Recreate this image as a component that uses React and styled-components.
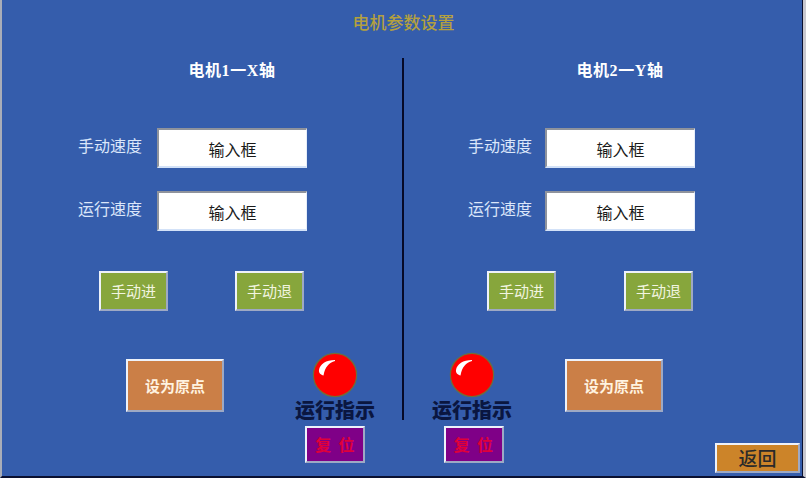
import React from 'react';
import styled, {createGlobalStyle} from 'styled-components';

const GlobalStyle = createGlobalStyle`
  html, body {
    margin: 0;
    padding: 0;
    background: #355dac;
  }
  * {
    box-sizing: border-box;
  }
`;

const CJK = `"Liberation Serif", "Noto Sans CJK SC", serif`;

const Screen = styled.div`
  width: 806px;
  height: 478px;
  overflow: hidden;
  background: #355dac;
  border-left: 2px solid #a9adb8;
  border-right: 3px solid #c8c8d0;
  border-bottom: 2px solid #0a1030;
  box-shadow: inset -1px 0 0 #0a1030;
  font-family: "Noto Sans CJK SC", sans-serif;
`;

const Title = styled.div`
  height: 58px;
  padding-top: 10px;
  padding-left: 2px;
  text-align: center;
  font-size: 17px;
  line-height: 24px;
  font-weight: 500;
  color: #b3a03f;
`;

const Body = styled.div`
  display: grid;
  grid-template-columns: 400px 2px 1fr;
`;

const Divider = styled.div`
  height: 362px;
  background: #060a28;
`;

const Panel = styled.div`
  display: flex;
  flex-direction: column;
`;

const Heading = styled.div`
  width: ${p => p.$width}px;
  height: 24px;
  margin-left: ${p => p.$left}px;
  margin-bottom: 46px;
  text-align: center;
  font-family: ${CJK};
  font-size: 16px;
  line-height: 26px;
  font-weight: 700;
  letter-spacing: 0.6px;
  color: #fff;
`;

const Fields = styled.div`
  display: flex;
  flex-direction: column;
  gap: 23px;
  margin-left: ${p => p.$left}px;
  margin-bottom: 40px;
`;

const FieldRow = styled.div`
  display: flex;
  align-items: center;
  gap: ${p => p.$gap}px;
`;

const FieldLabel = styled.span`
  width: 64px;
  margin-top: -6px;
  font-size: 16px;
  line-height: 24px;
  color: #dbe6fa;
  white-space: nowrap;
`;

const InputBox = styled.div`
  width: 150px;
  height: 40px;
  padding-top: 2px;
  display: flex;
  align-items: center;
  justify-content: center;
  background: #fff;
  border-style: solid;
  border-width: 2px 1px 2px 2px;
  border-color: #8f939c #e6eefa #d3e2f8 #8f939c;
  font-size: 16px;
  color: #1a1a1a;
`;

const JogRow = styled.div`
  display: flex;
  gap: ${p => p.$gap}px;
  margin-left: ${p => p.$left}px;
  margin-bottom: 41px;
`;

const Bevel = styled.div`
  display: flex;
  align-items: center;
  justify-content: center;
  flex-shrink: 0;
  border: 2px solid;
  border-color: #eef2fa #9ea9c4 #9ea9c4 #eef2fa;
  white-space: pre;
`;

const JogButton = styled(Bevel)`
  width: 69px;
  height: 40px;
  padding-bottom: 2px;
  background: #87a63c;
  font-size: 15px;
  color: #f2f5e0;
`;

const BottomRow = styled.div`
  display: flex;
  align-items: flex-start;
  gap: ${p => p.$gap}px;
  margin-left: ${p => p.$left}px;
`;

const OriginButton = styled(Bevel)`
  width: 98px;
  height: 53px;
  margin-top: 7px;
  background: #cb7f47;
  font-size: 15px;
  font-weight: 700;
  color: #fff3e0;
`;

const Indicator = styled.div`
  width: 80px;
  display: flex;
  flex-direction: column;
  align-items: center;
`;

const Lamp = styled.svg`
  display: block;
  width: 46px;
  height: 46px;
`;

const IndicatorLabel = styled.div`
  height: 28px;
  font-family: ${CJK};
  font-size: 20px;
  line-height: 26px;
  font-weight: 900;
  color: #0a1640;
  white-space: nowrap;
`;

const ResetButton = styled(Bevel)`
  width: 60px;
  height: 37px;
  margin-left: ${p => p.$shift}px;
  padding-bottom: 2px;
  background: #7f0087;
  font-size: 16px;
  font-weight: 700;
  color: #e0003a;
`;

const BackButton = styled(Bevel)`
  width: 85px;
  height: 30px;
  margin-top: 91px;
  margin-left: -1px;
  padding-bottom: 2px;
  background: #cc8429;
  font-family: ${CJK};
  font-size: 19px;
  font-weight: 500;
  color: #2a2a2a;
`;

function RunLamp() {
  return (
    <Lamp viewBox="0 0 46 46">
      <circle cx="23" cy="23" r="21.6" fill="#f00" stroke="#6f6f3a" strokeWidth="1.2" />
      <path d="M7 18 C8 12 14 8 23 8 L23 9 C17 10.5 13 15 11.5 23.5 C9 23 6.5 21 7 18 Z" fill="#fff" />
    </Lamp>
  );
}

function Field({label, gap}) {
  return (
    <FieldRow $gap={gap}>
      <FieldLabel>{label}</FieldLabel>
      <InputBox>输入框</InputBox>
    </FieldRow>
  );
}

function RunIndicator({resetShift = 0}) {
  return (
    <Indicator>
      <RunLamp />
      <IndicatorLabel>运行指示</IndicatorLabel>
      <ResetButton $shift={resetShift}>{'复  位'}</ResetButton>
    </Indicator>
  );
}

export default function App() {
  return (
    <>
      <GlobalStyle />
      <Screen>
        <Title>电机参数设置</Title>
        <Body>
          <Panel>
            <Heading $left={76} $width={308}>电机1一X轴</Heading>
            <Fields $left={76}>
              <Field label="手动速度" gap={15} />
              <Field label="运行速度" gap={15} />
            </Fields>
            <JogRow $left={97} $gap={67}>
              <JogButton>手动进</JogButton>
              <JogButton>手动退</JogButton>
            </JogRow>
            <BottomRow $left={124} $gap={71}>
              <OriginButton>设为原点</OriginButton>
              <RunIndicator />
            </BottomRow>
          </Panel>
          <Divider />
          <Panel>
            <Heading $left={64} $width={304}>电机2一Y轴</Heading>
            <Fields $left={64}>
              <Field label="手动速度" gap={13} />
              <Field label="运行速度" gap={13} />
            </Fields>
            <JogRow $left={83} $gap={68}>
              <JogButton>手动进</JogButton>
              <JogButton>手动退</JogButton>
            </JogRow>
            <BottomRow $left={28} $gap={53}>
              <RunIndicator resetShift={3} />
              <OriginButton>设为原点</OriginButton>
              <BackButton>返回</BackButton>
            </BottomRow>
          </Panel>
        </Body>
      </Screen>
    </>
  );
}
